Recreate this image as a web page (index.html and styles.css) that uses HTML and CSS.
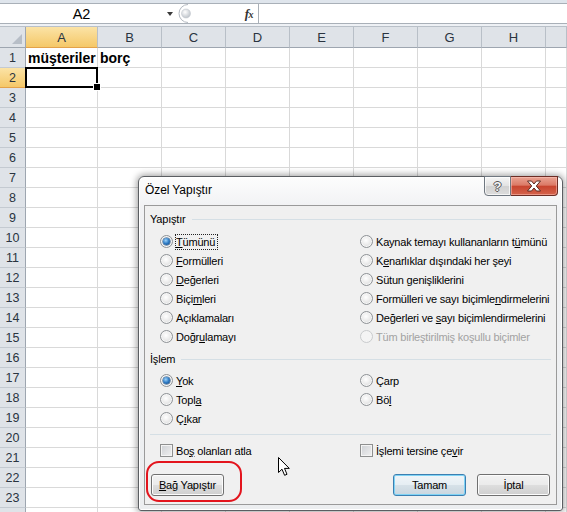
FILE: index.html
```html
<!DOCTYPE html>
<html lang="tr">
<head>
<meta charset="utf-8">
<title>Özel Yapıştır</title>
<link rel="stylesheet" href="styles.css">
</head>
<body>
<div class="ribbon-edge"></div>
<div class="fbar">
  <div class="namebox">A2</div>
  <div class="nb-drop"><span class="tri"></span></div>
  <div class="grip">
    <svg width="18" height="19" viewBox="0 0 18 19">
      <defs><radialGradient id="gg" cx="40%" cy="35%" r="70%"><stop offset="0" stop-color="#ffffff"/><stop offset="1" stop-color="#b9bfc6"/></radialGradient></defs>
      <path d="M11 0.5 A9 9 0 0 0 11 18.5" fill="none" stroke="#b3b9c1"/>
      <circle cx="9" cy="9.5" r="4.5" fill="url(#gg)" stroke="#c3c8ce" stroke-width="0.6"/>
    </svg>
  </div>
  <div class="fx-area"><span class="fx">f<span class="fxx">x</span></span></div>
  <div class="formula"></div>
</div>
<div class="band"></div>
<div class="sheet">
  <div class="corner"></div><div class="ch sel">A</div><div class="ch">B</div><div class="ch">C</div><div class="ch">D</div><div class="ch">E</div><div class="ch">F</div><div class="ch">G</div><div class="ch">H</div><div class="ch"></div>
  <div class="rh">1</div><div class="c txt">müşteriler</div><div class="c txt">borç</div><div class="c"></div><div class="c"></div><div class="c"></div><div class="c"></div><div class="c"></div><div class="c"></div><div class="c"></div>
  <div class="rh sel">2</div><div class="c active"></div><div class="c"></div><div class="c"></div><div class="c"></div><div class="c"></div><div class="c"></div><div class="c"></div><div class="c"></div><div class="c"></div>
  <div class="rh">3</div><div class="c"></div><div class="c"></div><div class="c"></div><div class="c"></div><div class="c"></div><div class="c"></div><div class="c"></div><div class="c"></div><div class="c"></div>
  <div class="rh">4</div><div class="c"></div><div class="c"></div><div class="c"></div><div class="c"></div><div class="c"></div><div class="c"></div><div class="c"></div><div class="c"></div><div class="c"></div>
  <div class="rh">5</div><div class="c"></div><div class="c"></div><div class="c"></div><div class="c"></div><div class="c"></div><div class="c"></div><div class="c"></div><div class="c"></div><div class="c"></div>
  <div class="rh">6</div><div class="c"></div><div class="c"></div><div class="c"></div><div class="c"></div><div class="c"></div><div class="c"></div><div class="c"></div><div class="c"></div><div class="c"></div>
  <div class="rh">7</div><div class="c"></div><div class="c"></div><div class="c"></div><div class="c"></div><div class="c"></div><div class="c"></div><div class="c"></div><div class="c"></div><div class="c"></div>
  <div class="rh">8</div><div class="c"></div><div class="c"></div><div class="c"></div><div class="c"></div><div class="c"></div><div class="c"></div><div class="c"></div><div class="c"></div><div class="c"></div>
  <div class="rh">9</div><div class="c"></div><div class="c"></div><div class="c"></div><div class="c"></div><div class="c"></div><div class="c"></div><div class="c"></div><div class="c"></div><div class="c"></div>
  <div class="rh">10</div><div class="c"></div><div class="c"></div><div class="c"></div><div class="c"></div><div class="c"></div><div class="c"></div><div class="c"></div><div class="c"></div><div class="c"></div>
  <div class="rh">11</div><div class="c"></div><div class="c"></div><div class="c"></div><div class="c"></div><div class="c"></div><div class="c"></div><div class="c"></div><div class="c"></div><div class="c"></div>
  <div class="rh">12</div><div class="c"></div><div class="c"></div><div class="c"></div><div class="c"></div><div class="c"></div><div class="c"></div><div class="c"></div><div class="c"></div><div class="c"></div>
  <div class="rh">13</div><div class="c"></div><div class="c"></div><div class="c"></div><div class="c"></div><div class="c"></div><div class="c"></div><div class="c"></div><div class="c"></div><div class="c"></div>
  <div class="rh">14</div><div class="c"></div><div class="c"></div><div class="c"></div><div class="c"></div><div class="c"></div><div class="c"></div><div class="c"></div><div class="c"></div><div class="c"></div>
  <div class="rh">15</div><div class="c"></div><div class="c"></div><div class="c"></div><div class="c"></div><div class="c"></div><div class="c"></div><div class="c"></div><div class="c"></div><div class="c"></div>
  <div class="rh">16</div><div class="c"></div><div class="c"></div><div class="c"></div><div class="c"></div><div class="c"></div><div class="c"></div><div class="c"></div><div class="c"></div><div class="c"></div>
  <div class="rh">17</div><div class="c"></div><div class="c"></div><div class="c"></div><div class="c"></div><div class="c"></div><div class="c"></div><div class="c"></div><div class="c"></div><div class="c"></div>
  <div class="rh">18</div><div class="c"></div><div class="c"></div><div class="c"></div><div class="c"></div><div class="c"></div><div class="c"></div><div class="c"></div><div class="c"></div><div class="c"></div>
  <div class="rh">19</div><div class="c"></div><div class="c"></div><div class="c"></div><div class="c"></div><div class="c"></div><div class="c"></div><div class="c"></div><div class="c"></div><div class="c"></div>
  <div class="rh">20</div><div class="c"></div><div class="c"></div><div class="c"></div><div class="c"></div><div class="c"></div><div class="c"></div><div class="c"></div><div class="c"></div><div class="c"></div>
  <div class="rh">21</div><div class="c"></div><div class="c"></div><div class="c"></div><div class="c"></div><div class="c"></div><div class="c"></div><div class="c"></div><div class="c"></div><div class="c"></div>
  <div class="rh">22</div><div class="c"></div><div class="c"></div><div class="c"></div><div class="c"></div><div class="c"></div><div class="c"></div><div class="c"></div><div class="c"></div><div class="c"></div>
  <div class="rh">23</div><div class="c"></div><div class="c"></div><div class="c"></div><div class="c"></div><div class="c"></div><div class="c"></div><div class="c"></div><div class="c"></div><div class="c"></div>
  <div class="rh"></div><div class="c"></div><div class="c"></div><div class="c"></div><div class="c"></div><div class="c"></div><div class="c"></div><div class="c"></div><div class="c"></div><div class="c"></div>
</div>

<div class="dialog">
  <div class="titlebar">
    <span class="title">Özel Yapıştır</span>
    <div class="capbtns">
      <span class="help">?</span>
      <span class="close">
        <svg width="16" height="12" viewBox="0 0 16 12"><path d="M1.5 1 H5.5 L8 4 L10.5 1 H14.5 L10.3 6 L14.5 11 H10.5 L8 8 L5.5 11 H1.5 L5.7 6 Z" fill="#ffffff" stroke="#5a2a22" stroke-width="1" stroke-linejoin="round"/></svg>
      </span>
    </div>
  </div>
  <div class="client">
    <div class="ghead"><span>Yapıştır</span><i class="gline"></i></div>
    <div class="opts">
      <div class="opt"><span class="radio on"></span><span class="focus"><u>T</u>ümünü</span></div>
      <div class="opt"><span class="radio"></span><span>Kaynak temayı kullananların t<u>ü</u>münü</span></div>
      <div class="opt"><span class="radio"></span><span><u>F</u>ormülleri</span></div>
      <div class="opt"><span class="radio"></span><span>K<u>e</u>narlıklar dışındaki her şeyi</span></div>
      <div class="opt"><span class="radio"></span><span><u>D</u>eğerleri</span></div>
      <div class="opt"><span class="radio"></span><span>Sütun <u>g</u>enişliklerini</span></div>
      <div class="opt"><span class="radio"></span><span>Biçi<u>m</u>leri</span></div>
      <div class="opt"><span class="radio"></span><span>Formülleri ve sayı biçimle<u>n</u>dirmelerini</span></div>
      <div class="opt"><span class="radio"></span><span>Açıklamaları</span></div>
      <div class="opt"><span class="radio"></span><span>Değerleri ve <u>s</u>ayı biçimlendirmelerini</span></div>
      <div class="opt"><span class="radio"></span><span>Doğr<u>u</u>lamayı</span></div>
      <div class="opt disabled"><span class="radio"></span><span>Tüm birleştirilmiş koşullu biçimler</span></div>
    </div>
    <div class="ghead gap2"><span>İşlem</span><i class="gline"></i></div>
    <div class="opts opts2">
      <div class="opt"><span class="radio on"></span><span><u>Y</u>ok</span></div>
      <div class="opt"><span class="radio"></span><span>Çarp</span></div>
      <div class="opt"><span class="radio"></span><span>Topl<u>a</u></span></div>
      <div class="opt"><span class="radio"></span><span>Bö<u>l</u></span></div>
      <div class="opt"><span class="radio"></span><span>Ç<u>ı</u>kar</span></div>
    </div>
    <div class="sep"></div>
    <div class="opts checks">
      <div class="opt"><span class="check"></span><span>Bo<u>ş</u> olanları atla</span></div>
      <div class="opt"><span class="check"></span><span>İşlemi tersine çe<u>v</u>ir</span></div>
    </div>
    <div class="btnrow">
      <button class="btn"><u>B</u>ağ Yapıştır</button>
      <div class="btngroup">
        <button class="btn default">Tamam</button>
        <button class="btn">İptal</button>
      </div>
    </div>
  </div>
</div>

<div class="mark"></div>
<svg class="cursor" width="13" height="20" viewBox="0 0 13 20">
  <path d="M0.5 0.5 L0.5 15.5 L4 12.2 L6.6 18.3 L9 17.3 L6.5 11.4 L11.3 11.4 Z" fill="#ffffff" stroke="#000000" stroke-width="1" stroke-linejoin="miter"/>
</svg>
</body>
</html>
```

FILE: styles.css
```css
* { box-sizing: border-box; }

body {
  margin: 0;
  width: 567px;
  height: 512px;
  overflow: hidden;
  position: relative;
  background: #ffffff;
  font-family: "Liberation Sans", Arial, sans-serif;
  color: #000;
}

/* ---------- formula bar ---------- */
.ribbon-edge { height: 3px; background: #dfe5ec; }

.fbar {
  display: flex;
  height: 21px;
  border-top: 1px solid #a9b0b8;
  border-bottom: 1px solid #a9b0b8;
  background: #ffffff;
}
.namebox {
  width: 163px;
  display: flex;
  align-items: center;
  justify-content: center;
  font-size: 14.5px;
  padding-top: 1px;
}
.nb-drop {
  width: 14px;
  display: flex;
  align-items: center;
  justify-content: center;
}
.tri {
  width: 0; height: 0;
  border-left: 3.5px solid transparent;
  border-right: 3.5px solid transparent;
  border-top: 4px solid #3a3a3a;
}
.grip { width: 18px; display: flex; align-items: center; }
.grip svg { display: block; }
.fx-area {
  width: 63px;
  display: flex;
  align-items: center;
  justify-content: flex-end;
  padding-right: 5px;
}
.fx {
  font-family: "Liberation Serif", "Times New Roman", serif;
  font-style: italic;
  font-weight: bold;
  font-size: 13px;
  color: #333;
  letter-spacing: -0.5px;
}
.fxx { font-size: 10px; }
.formula { flex: 1; border-left: 1px solid #a9b0b8; }

.band { height: 2px; background: #eef1f5; }

/* ---------- sheet ---------- */
.sheet {
  display: grid;
  grid-template-columns: 26px 72px repeat(7, 64px) 1fr;
  grid-template-rows: 21px;
  grid-auto-rows: 20px;
  border-top: 1px solid #b9c0c8;
}
.sheet > div {
  border-right: 1px solid #d9d9d9;
  border-bottom: 1px solid #d9d9d9;
}
.corner {
  position: relative;
  background: #dfe3e8;
  border-right-color: #9ea6b0 !important;
  border-bottom-color: #9ea6b0 !important;
}
.corner::after {
  content: "";
  position: absolute;
  right: 3px;
  bottom: 3px;
  width: 0; height: 0;
  border-left: 10px solid transparent;
  border-bottom: 10px solid #b7bec7;
}
.ch, .rh {
  background: #dfe3e8;
  display: flex;
  align-items: center;
  justify-content: center;
  font-size: 13px;
  color: #2a3440;
}
.ch {
  border-right-color: #b8bfc7 !important;
  border-bottom-color: #9ea6b0 !important;
  padding-top: 1px;
}
.rh {
  border-right-color: #9ea6b0 !important;
  border-bottom-color: #c4cad1 !important;
  font-size: 12.5px;
}
.ch.sel, .rh.sel {
  background: linear-gradient(#fbe3a6, #f5c868);
  border-bottom-color: #e3a24a !important;
}
.rh.sel { border-right-color: #e3a24a !important; }

.c.txt {
  font-weight: bold;
  font-size: 14px;
  display: flex;
  align-items: center;
  padding-left: 2px;
  white-space: nowrap;
}
.c.active { position: relative; }
.c.active::after {
  content: "";
  position: absolute;
  left: -1px; top: -1px; right: -1px; bottom: -1px;
  border: 2px solid #000;
}
.c.active::before {
  content: "";
  position: absolute;
  right: -4px;
  bottom: -4px;
  width: 6px;
  height: 6px;
  background: #000;
  border: 1px solid #fff;
  z-index: 2;
}

/* ---------- dialog ---------- */
.dialog {
  position: absolute;
  left: 138px;
  top: 176px;
  width: 425px;
  height: 335px;
  border: 1px solid #5b5e62;
  border-radius: 6px 6px 3px 3px;
  background: linear-gradient(#fdfdfd, #f1f2f4 30px, #eceef0);
  box-shadow: inset 0 0 0 1px #ffffff, 0 0 7px 1px rgba(0, 0, 0, 0.4);
  padding: 0 5px 5px 5px;
  display: flex;
  flex-direction: column;
  font-family: "Liberation Sans", Arial, sans-serif;
  font-size: 11px;
  letter-spacing: -0.2px;
}
.titlebar {
  height: 28px;
  display: flex;
  justify-content: space-between;
  align-items: flex-start;
}
.title {
  font-size: 12px;
  letter-spacing: -0.1px;
  padding-left: 1px;
  margin-top: 6px;
  color: #000;
}
.capbtns {
  display: flex;
  margin-top: -1px;
  margin-right: -1px;
}
.help, .close {
  height: 20px;
  display: flex;
  align-items: center;
  justify-content: center;
}
.help {
  width: 27px;
  border: 1px solid #6f7780;
  border-radius: 0 0 0 4px;
  background: linear-gradient(#f6f6f6, #e3e3e3 48%, #d2d2d2 52%, #dcdcdc);
  box-shadow: inset 0 0 0 1px rgba(255,255,255,0.7);
  font-size: 13px;
  font-weight: bold;
  color: #f4f4f4;
  text-shadow: 1px 0 0 #555, -1px 0 0 #555, 0 1px 0 #555, 0 -1px 0 #555;
  letter-spacing: 0;
}
.close {
  width: 47px;
  border: 1px solid #6b2c24;
  border-left: none;
  border-radius: 0 0 4px 0;
  background: linear-gradient(#e9a393, #dc7a66 45%, #c8452f 52%, #d4634c);
  box-shadow: inset 0 0 0 1px rgba(255,200,190,0.5);
}
.close svg { display: block; }

.client {
  flex: 1;
  border: 1px solid #9a9a9a;
  background: #f0f0f0;
  padding: 6px 5px 0 5px;
  display: flex;
  flex-direction: column;
}
.ghead {
  display: flex;
  align-items: center;
  gap: 6px;
  height: 14px;
}
.ghead.gap2 { margin-top: 6px; }
.gline {
  flex: 1;
  height: 1px;
  background: #d5dfe5;
}
.opts {
  display: grid;
  grid-template-columns: 200px 1fr;
  grid-auto-rows: 19px;
  margin-top: 6px;
  padding-left: 10px;
}
.opts2 { margin-top: 5px; }
.opt {
  display: flex;
  align-items: center;
  gap: 3px;
  white-space: nowrap;
}
.opt u { text-decoration: underline; text-underline-offset: 1px; }
.focus {
  border: 1px dotted #222;
  padding: 1px 2px 1px 0;
  margin: -2px 0 -2px -1px;
}
.disabled { color: #a2a2a2; }

.radio {
  width: 13px;
  height: 13px;
  flex: none;
  border-radius: 50%;
  border: 1px solid #8e9296;
  background: radial-gradient(circle at 45% 40%, #ffffff 0%, #ececec 45%, #cfd1d3 100%);
  box-shadow: inset 0 0 0 1px #f7f7f7;
  position: relative;
}
.radio.on::after {
  content: "";
  position: absolute;
  left: 2px; top: 2px;
  width: 7px; height: 7px;
  border-radius: 50%;
  background: radial-gradient(circle at 40% 35%, #9fd4fb 0%, #2e7bc4 50%, #0f3f7a 100%);
  box-shadow: 0 0 0 0.5px #25507d;
}
.disabled .radio {
  border-color: #c9cbcd;
  background: #f4f4f4;
  box-shadow: none;
}

.sep {
  height: 1px;
  background: #d5dfe5;
  margin-top: 6px;
}
.checks { margin-top: 6px; }
.check {
  width: 13px;
  height: 13px;
  flex: none;
  border: 1px solid #8e8f8f;
  background: linear-gradient(135deg, #cdd0d4, #f1f1f1);
  box-shadow: inset 0 0 0 1px #f4f4f4;
}

.btnrow {
  display: flex;
  justify-content: space-between;
  margin-top: 14px;
  padding: 0 1px;
}
.btngroup { display: flex; gap: 11px; }
.btn {
  width: 73px;
  height: 22px;
  padding: 0;
  border: 1px solid #707070;
  border-radius: 3px;
  background: linear-gradient(#f2f2f2, #ebebeb 48%, #dddddd 52%, #cfcfcf);
  box-shadow: inset 0 0 0 1px #fcfcfc;
  font-family: "Liberation Sans", Arial, sans-serif;
  font-size: 11px;
  letter-spacing: -0.2px;
  color: #000;
}
.btn u { text-decoration: underline; }
.btn.default {
  border-color: #3c7fb1;
  box-shadow: inset 0 0 0 1px #7fd3f5;
  background: linear-gradient(#f0f5f8, #e6eef3 48%, #d6e1e8 52%, #c9d6df);
}

/* ---------- overlays ---------- */
.mark {
  position: absolute;
  left: 146px;
  top: 461px;
  width: 96px;
  height: 41px;
  border: 2px solid #e3141d;
  border-radius: 13px;
}
.cursor {
  position: absolute;
  left: 278px;
  top: 457px;
}
```
